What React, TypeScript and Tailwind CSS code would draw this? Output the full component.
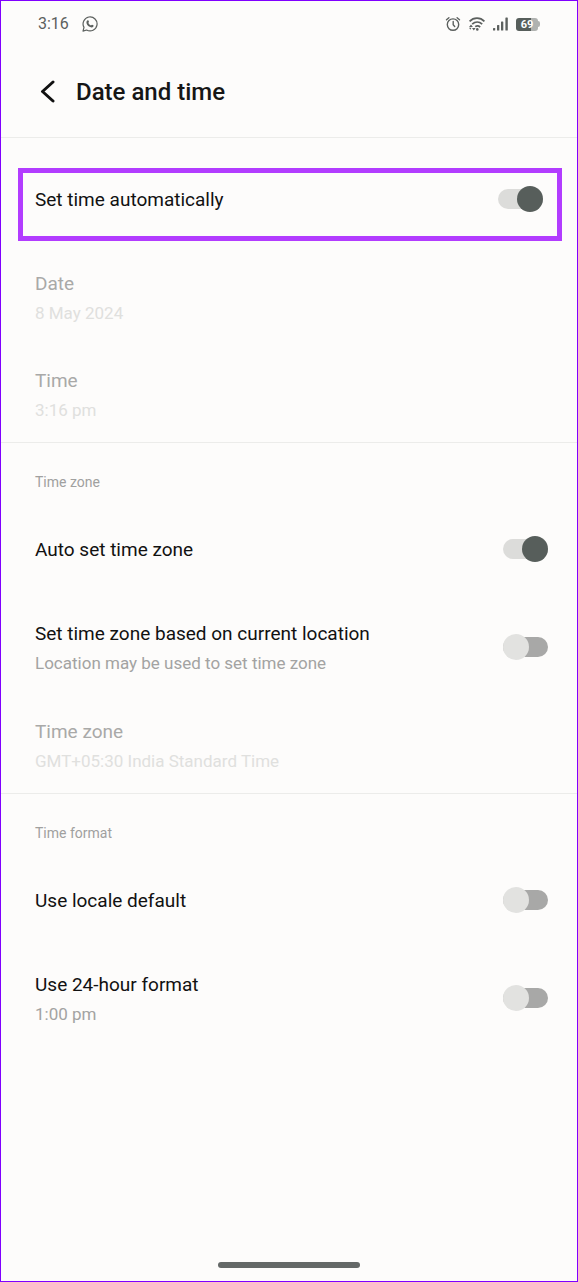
import { useState } from "react";

function WhatsAppIcon() {
  return (
    <svg viewBox="0 0 16 16" className="size-4" fill="none" stroke="#5c605e" aria-hidden="true">
      <path
        d="M1 15.1l1-3.7A7 7 0 1 1 4.6 14z"
        strokeWidth="1.2"
        strokeLinejoin="round"
      />
      <path
        d="M5.3 4.5c.5-.4 1-.3 1.2.2l.5 1.1c.1.4-.5.8-.6 1.1.5 1.1 1.4 2 2.6 2.5.4-.1.7-.8 1.1-.7l1.2.6c.4.2.4.7.1 1.2-.7 1-2 1.1-3.2.6-1.7-.7-3-2-3.6-3.7-.3-1.1-.1-2.2.7-2.9z"
        fill="#5c605e"
        stroke="none"
      />
    </svg>
  );
}

function AlarmIcon() {
  return (
    <svg viewBox="0 0 16 16" className="size-4" fill="none" stroke="#5c605e" strokeWidth="1.4" strokeLinecap="round" aria-hidden="true">
      <circle cx="8" cy="8.6" r="5.7" />
      <path d="M8.2 5.5v3.3l1.5 1.7M1.5 3.7l2.4-2M14.5 3.7l-2.4-2" />
    </svg>
  );
}

function WifiIcon() {
  return (
    <svg viewBox="0 0 18 16" className="h-4 w-[18px]" fill="none" stroke="#5c605e" strokeWidth="1.7" aria-hidden="true">
      <path d="M1.6 5.3C5.8 1 12.2 1 16.4 5.3M4.2 8.2c3-2.8 7-2.8 10 0M7.2 10.6c1.6-1 3.6-.8 5 .5" />
      <circle cx="9.3" cy="13.4" r="1.3" fill="#5c605e" stroke="none" />
      <path
        d="M3 8.6l1.9 2.4H1.1zM5.8 14.5L4 12.1h3.6zM1.1 11.8h2.4l-1.2 2z"
        fill="#5c605e"
        stroke="none"
      />
    </svg>
  );
}

function SignalIcon() {
  return (
    <svg viewBox="0 0 16 14" className="h-[14px] w-4" fill="#5c605e" aria-hidden="true">
      <rect x="0" y="11" width="2.2" height="2.5" rx=".6" />
      <rect x="4" y="8" width="2.3" height="5.5" rx=".6" />
      <rect x="8" y="4.5" width="2.3" height="9" rx=".6" />
      <rect x="12.4" y="0.5" width="2.4" height="13" rx=".6" />
    </svg>
  );
}

function Battery() {
  return (
    <div className="flex items-center" aria-label="Battery 69 percent">
      <div className="h-[13px] w-[22px] rounded-[3px] bg-linear-to-r from-[#575e5b] from-70% to-[#b0b2b0] to-70% text-center text-[11px] leading-[14px] font-bold text-white">
        69
      </div>
      <div className="h-1.5 w-0.5 rounded-r-sm bg-[#b0b2b0]" />
    </div>
  );
}

function StatusBar() {
  return (
    <div className="flex h-[46px] items-center justify-between px-[37px] text-base text-[#5c605e]">
      <div className="flex items-center gap-[13px]">
        <span>3:16</span>
        <WhatsAppIcon />
      </div>
      <div className="flex items-center gap-[7px]">
        <AlarmIcon />
        <WifiIcon />
        <SignalIcon />
        <Battery />
      </div>
    </div>
  );
}

function Toggle({ id, checked, onChange }: { id: string; checked: boolean; onChange: () => void }) {
  return (
    <input
      type="checkbox"
      role="switch"
      id={id}
      checked={checked}
      onChange={onChange}
      className="relative h-5 w-[45px] shrink-0 cursor-pointer appearance-none rounded-full bg-[#a8a8a7] before:absolute before:-top-[3px] before:left-0 before:size-[26px] before:rounded-full before:bg-[#e2e2e0] checked:bg-[#dcdcda] checked:before:left-[19px] checked:before:bg-[#575e5b]"
    />
  );
}

function SwitchRow({
  id,
  title,
  note,
  defaultOn = false,
  highlighted = false,
}: {
  id: string;
  title: string;
  note?: string;
  defaultOn?: boolean;
  highlighted?: boolean;
}) {
  const [on, setOn] = useState(defaultOn);

  return (
    <div
      className={`relative flex h-[98px] items-center justify-between pl-[34px] ${
        highlighted ? "pr-[34px]" : "pr-[29px]"
      }`}
    >
      <label htmlFor={id} className="cursor-pointer pt-0.5">
        <span className="block text-[19px] leading-[30px] text-[#111111]">{title}</span>
        {note && <span className="block text-[17px] leading-7 text-[#a3a3a2]">{note}</span>}
      </label>
      <Toggle id={id} checked={on} onChange={() => setOn(!on)} />
      {highlighted && (
        <div className="pointer-events-none absolute top-[18px] right-[15px] bottom-[7px] left-[17px] border-5 border-[#b23cff]" />
      )}
    </div>
  );
}

function DisabledRow({ title, value }: { title: string; value: string }) {
  return (
    <button
      type="button"
      disabled
      className="flex h-[97px] w-full flex-col justify-center pt-0.5 pl-[34px] text-left"
    >
      <span className="text-[19px] leading-[30px] text-[#a9a9a8]">{title}</span>
      <span className="text-[17px] leading-7 text-[#e0e0de]">{value}</span>
    </button>
  );
}

function SectionTitle({ children }: { children: string }) {
  return (
    <h2 className="h-[57px] pt-[29px] pl-[34px] text-sm leading-5 text-[#a0a09f]">{children}</h2>
  );
}

export default function App() {
  return (
    <div className="flex min-h-screen flex-col border border-[#8000ff] bg-[#fdfcfb] font-['Roboto',sans-serif]">
      <StatusBar />

      <header className="flex h-[91px] items-center gap-4 border-b border-[#ececea] pl-[35px]">
        <button type="button" aria-label="Back" className="flex size-6 items-center justify-center">
          <svg viewBox="0 0 24 24" className="size-6" fill="none" stroke="#111111" strokeWidth="3" strokeLinecap="round" strokeLinejoin="round">
            <path d="M17 2L6.500 11.500 17 21" />
          </svg>
        </button>
        <h1 className="text-2xl font-medium text-[#161616]">Date and time</h1>
      </header>

      <main className="grow">
        <section className="border-b border-[#ececea] pt-3">
          <SwitchRow id="auto-time" title="Set time automatically" defaultOn highlighted />
          <DisabledRow title="Date" value="8 May 2024" />
          <DisabledRow title="Time" value="3:16 pm" />
        </section>

        <section className="border-b border-[#ececea]">
          <SectionTitle>Time zone</SectionTitle>
          <SwitchRow id="auto-zone" title="Auto set time zone" defaultOn />
          <SwitchRow
            id="location-zone"
            title="Set time zone based on current location"
            note="Location may be used to set time zone"
          />
          <DisabledRow title="Time zone" value="GMT+05:30 India Standard Time" />
        </section>

        <section>
          <SectionTitle>Time format</SectionTitle>
          <SwitchRow id="locale" title="Use locale default" />
          <SwitchRow id="hour-format" title="Use 24-hour format" note="1:00 pm" />
        </section>
      </main>

      <div className="flex justify-center pt-6 pb-[13px]">
        <div className="h-1.5 w-[142px] rounded-full bg-[#646867]" />
      </div>
    </div>
  );
}
